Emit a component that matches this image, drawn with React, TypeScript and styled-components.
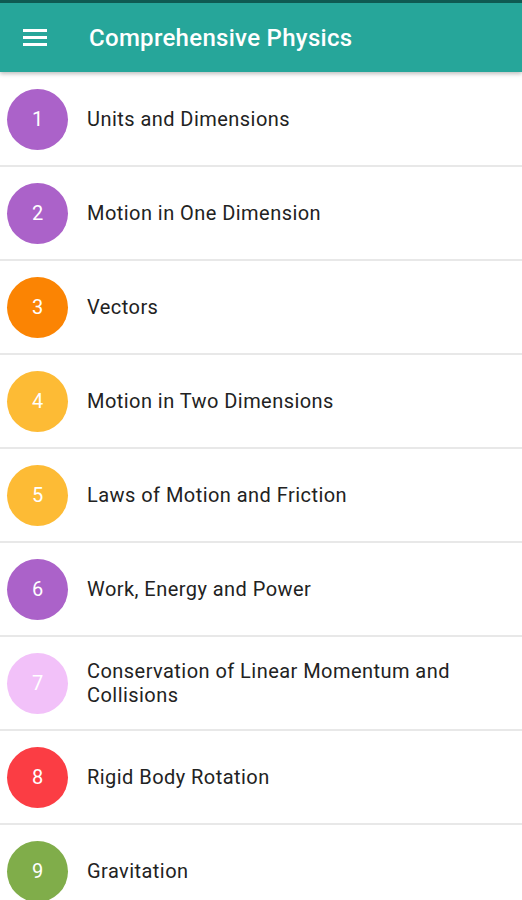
import { createGlobalStyle, styled } from "styled-components";

const GlobalStyle = createGlobalStyle`
  html, body {
    margin: 0;
    padding: 0;
    background: #ffffff;
    font-family: Roboto, "Liberation Sans", sans-serif;
  }
`;

interface Chapter {
  num: number;
  title: string;
  color: string;
}

const chapters: Chapter[] = [
  { num: 1, title: "Units and Dimensions", color: "#ab62c9" },
  { num: 2, title: "Motion in One Dimension", color: "#ab62c9" },
  { num: 3, title: "Vectors", color: "#fb8403" },
  { num: 4, title: "Motion in Two Dimensions", color: "#fdbb35" },
  { num: 5, title: "Laws of Motion and Friction", color: "#fdbb35" },
  { num: 6, title: "Work, Energy and Power", color: "#ab62c9" },
  { num: 7, title: "Conservation of Linear Momentum and Collisions", color: "#f2c1f9" },
  { num: 8, title: "Rigid Body Rotation", color: "#fb3d44" },
  { num: 9, title: "Gravitation", color: "#80ad4a" },
];

const Page = styled.div`
  width: 522px;
  height: 900px;
  overflow: hidden;
  display: flex;
  flex-direction: column;
`;

const AppBar = styled.header`
  height: 69px;
  border-top: 3px solid #0f5a52;
  background: #26a69a;
  display: flex;
  align-items: center;
  padding-left: 23px;
  box-shadow: 0 2px 4px rgba(0, 0, 0, 0.25);
  position: relative;
  z-index: 1;
  flex-shrink: 0;
`;

const Menu = styled.div`
  width: 24px;
  display: flex;
  flex-direction: column;
  gap: 4px;
  margin-right: 42px;

  span {
    display: block;
    height: 3px;
    background: #ffffff;
  }
`;

const Title = styled.h1`
  margin: 0;
  color: #ffffff;
  font-size: 24px;
  font-weight: 500;
  letter-spacing: 0.3px;
`;

const List = styled.ul`
  list-style: none;
  margin: 0;
  padding: 1px 0 0;
`;

const Row = styled.li`
  height: 92px;
  border-bottom: 2px solid #e8e8e8;
  display: flex;
  align-items: center;
  padding-left: 7px;
`;

const Badge = styled.div<{ $color: string }>`
  width: 61px;
  height: 61px;
  border-radius: 50%;
  background: ${(p) => p.$color};
  color: #ffffff;
  font-size: 20px;
  display: flex;
  align-items: center;
  justify-content: center;
  flex-shrink: 0;
  margin-right: 19px;
`;

const Label = styled.div`
  font-size: 20px;
  line-height: 24px;
  color: #222222;
  padding-right: 50px;
  letter-spacing: 0.45px;
`;

function App() {
  return (
    <Page>
      <GlobalStyle />
      <AppBar>
        <Menu>
          <span />
          <span />
          <span />
        </Menu>
        <Title>Comprehensive Physics</Title>
      </AppBar>
      <List>
        {chapters.map((c) => (
          <Row key={c.num}>
            <Badge $color={c.color}>{c.num}</Badge>
            <Label>{c.title}</Label>
          </Row>
        ))}
      </List>
    </Page>
  );
}

export default App;
